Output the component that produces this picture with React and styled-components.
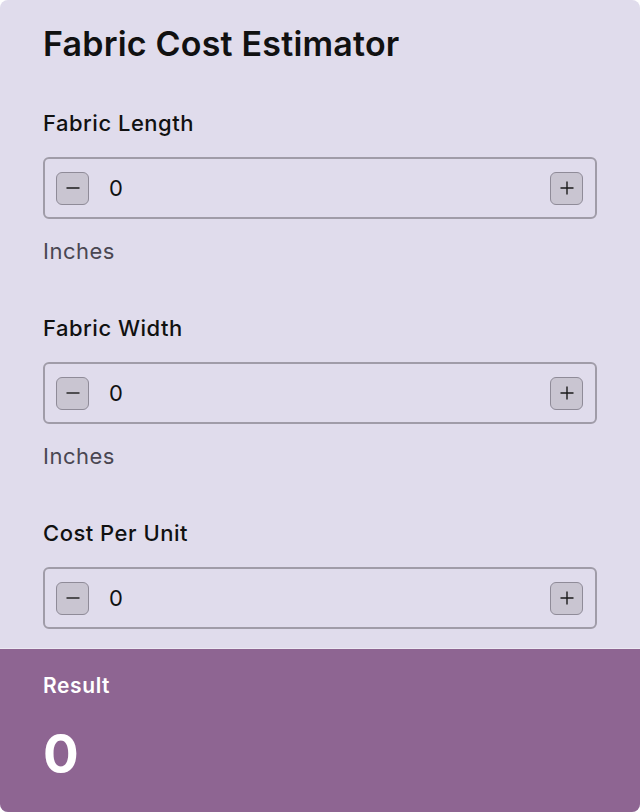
import { useState } from "react";
import styled, { createGlobalStyle } from "styled-components";

const GlobalStyle = createGlobalStyle`
  html, body {
    margin: 0;
    padding: 0;
    background: #ffffff;
  }
  body {
    font-family: Inter, "Noto Sans", "Liberation Sans", sans-serif;
    color: #111;
  }
`;

// ==== Card shell ====
const Card = styled.div`
  width: 640px;
  height: 812px;
  background: #e0dcec;
  border-radius: 8px;
  overflow: hidden;
  display: flex;
  flex-direction: column;
`;

const Body = styled.div`
  flex: 1;
  padding: 23px 43px 0 43px;
  display: flex;
  flex-direction: column;
`;

const Title = styled.h1`
  margin: 0 0 47px 0;
  font-size: 34px;
  line-height: 41px;
  font-weight: 600;
  letter-spacing: 0.2px;
  color: #111;
`;

// ==== Field group ====
const Field = styled.div`
  display: flex;
  flex-direction: column;
  margin-bottom: ${(p) => (p.$last ? "0" : "52px")};
`;

const Label = styled.label`
  font-size: 22px;
  line-height: 25px;
  font-weight: 500;
  letter-spacing: 0.5px;
  color: #111;
  margin-bottom: 21px;
`;

const Stepper = styled.div`
  height: 62px;
  box-sizing: border-box;
  border: 2px solid #a09ca8;
  border-radius: 6px;
  display: flex;
  align-items: center;
  padding: 0 12px 0 11px;
`;

const StepButton = styled.button`
  width: 33px;
  height: 33px;
  box-sizing: border-box;
  padding: 0;
  border: 1px solid #8f8b98;
  border-radius: 6px;
  background: #c9c5d1;
  display: flex;
  align-items: center;
  justify-content: center;
  cursor: pointer;
  color: #1a1a1a;
`;

const Value = styled.input`
  flex: 1;
  min-width: 0;
  border: none;
  outline: none;
  background: transparent;
  font-family: inherit;
  font-size: 22px;
  color: #111;
  padding: 0 0 0 20px;
`;

const Hint = styled.div`
  margin-top: 20px;
  font-size: 22px;
  line-height: 25px;
  letter-spacing: 0.5px;
  color: #4a4752;
`;

// ==== Result panel ====
const ResultPanel = styled.div`
  background: #8e6592;
  border-top: 1px solid #ece9f3;
  padding: 25px 43px 26px 43px;
  display: flex;
  flex-direction: column;
  color: #fff;
`;

const ResultLabel = styled.div`
  font-size: 21px;
  line-height: 24px;
  font-weight: 600;
  letter-spacing: 0.6px;
`;

const ResultValue = styled.div`
  margin-top: 25px;
  font-size: 53px;
  line-height: 63px;
  font-weight: 700;
`;

function MinusIcon() {
  return (
    <svg width="16" height="16" viewBox="0 0 16 16">
      <path d="M1.5 8h13" stroke="currentColor" strokeWidth="1.4" />
    </svg>
  );
}

function PlusIcon() {
  return (
    <svg width="16" height="16" viewBox="0 0 16 16">
      <path d="M1.5 8h13M8 1.5v13" stroke="currentColor" strokeWidth="1.4" />
    </svg>
  );
}

function NumberField({ label, hint, value, onChange, last }) {
  return (
    <Field $last={last}>
      <Label>{label}</Label>
      <Stepper>
        <StepButton onClick={() => onChange(value - 1)} aria-label="decrease">
          <MinusIcon />
        </StepButton>
        <Value
          value={value}
          onChange={(e) => onChange(Number(e.target.value) || 0)}
        />
        <StepButton onClick={() => onChange(value + 1)} aria-label="increase">
          <PlusIcon />
        </StepButton>
      </Stepper>
      {hint && <Hint>{hint}</Hint>}
    </Field>
  );
}

export default function App() {
  const [length, setLength] = useState(0);
  const [width, setWidth] = useState(0);
  const [cost, setCost] = useState(0);

  const result = length * width * cost;

  return (
    <>
      <GlobalStyle />
      <Card>
        <Body>
          <Title>Fabric Cost Estimator</Title>
          <NumberField label="Fabric Length" hint="Inches" value={length} onChange={setLength} />
          <NumberField label="Fabric Width" hint="Inches" value={width} onChange={setWidth} />
          <NumberField label="Cost Per Unit" value={cost} onChange={setCost} last />
        </Body>
        <ResultPanel>
          <ResultLabel>Result</ResultLabel>
          <ResultValue>{result}</ResultValue>
        </ResultPanel>
      </Card>
    </>
  );
}
